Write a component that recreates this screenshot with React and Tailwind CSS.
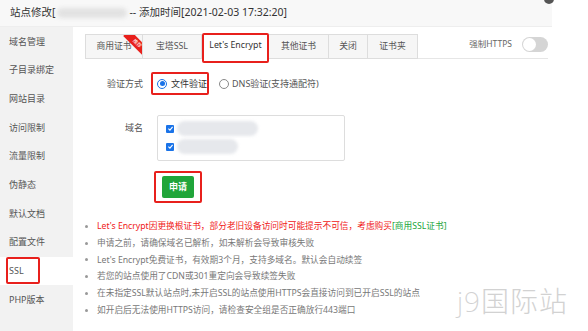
import React from "react";

const menu = [
  "域名管理",
  "子目录绑定",
  "网站目录",
  "访问限制",
  "流量限制",
  "伪静态",
  "默认文档",
  "配置文件",
  "SSL",
  "PHP版本",
];

const tabs = ["商用证书", "宝塔SSL", "Let's Encrypt", "其他证书", "关闭", "证书夹"];

const tips = [
  "申请之前，请确保域名已解析，如未解析会导致审核失败",
  "Let's Encrypt免费证书，有效期3个月，支持多域名。默认会自动续签",
  "若您的站点使用了CDN或301重定向会导致续签失败",
  "在未指定SSL默认站点时,未开启SSL的站点使用HTTPS会直接访问到已开启SSL的站点",
  "如开启后无法使用HTTPS访问，请检查安全组是否正确放行443端口",
];

const CheckBox = () => (
  <span className="w-[8px] h-[8px] rounded-[1px] bg-[#1a73e8] flex items-center justify-center">
    <svg viewBox="0 0 10 10" className="w-[7px] h-[7px]">
      <path d="M2 5.2 L4.2 7.3 L8 2.8" stroke="white" strokeWidth="1.6" fill="none" />
    </svg>
  </span>
);

const App = () => {
  return (
    <div
      className="w-[588px] h-[331px] bg-white relative overflow-hidden text-[#333]"
      style={{ fontFamily: '"Noto Sans", "Noto Sans CJK SC", sans-serif' }}
    >
      <div className="w-[552px] h-full flex flex-col">
        {/* Header */}
        <div className="h-[27px] shrink-0 bg-[#f8f8f8] border-b border-[#eee] flex items-center pl-[10px] text-[10.5px]">
          <span>站点修改[</span>
          <span className="w-[70px] h-[10px] mx-[2px] rounded-full bg-[#e2e2e2] blur-[2px]"></span>
          <span>-- 添加时间[2021-02-03 17:32:20]</span>
        </div>

        <div className="flex flex-1">
          {/* Sidebar */}
          <div className="w-[73px] shrink-0 bg-[#f2f2f2] text-[9px] text-[#555]">
            {menu.map((m) =>
              m === "SSL" ? (
                <div key={m} className="h-[28.7px] bg-white flex items-center pl-[6px]">
                  <span className="h-[27px] w-[34px] border-2 border-[#e8201c] rounded-[2px] flex items-center pl-[1px]">
                    SSL
                  </span>
                </div>
              ) : (
                <div key={m} className="h-[28.7px] flex items-center pl-[9px]">
                  {m}
                </div>
              )
            )}
          </div>

          {/* Content */}
          <div className="flex-1 pl-[12px] pr-[4px] pt-[7px]">
            <div className="flex items-start h-[25px] border-b border-[#e6e6e6] text-[8.8px] text-[#555]">
              {tabs.map((t, i) =>
                t === "Let's Encrypt" ? (
                  <div
                    key={t}
                    className="h-[30px] -mt-[1px] w-[67px] bg-white border-2 border-[#e8201c] rounded-[2px] flex items-center justify-center text-[#333] pb-[5px] relative z-10"
                  >
                    {t}
                  </div>
                ) : (
                  <div
                    key={t}
                    className={`h-[25px] border border-[#ddd] bg-[#f6f6f6] flex items-center justify-center relative overflow-hidden ${
                      i === 0 ? "w-[58px]" : i === 1 ? "w-[59px] border-l-0" : i === 3 ? "w-[60px] border-l-0" : i === 4 ? "w-[39px] border-l-0" : "w-[50px] border-l-0"
                    }`}
                  >
                    {t}
                    {i === 0 && (
                      <div className="absolute left-[36px] top-[4px] w-[30px] h-[9px] bg-[#e8201c] rotate-45 flex items-center justify-center">
                        <span className="text-[5px] text-white leading-none">推荐</span>
                      </div>
                    )}
                  </div>
                )
              )}
              <div className="flex-1 flex items-center justify-end h-[25px] pb-[4px] gap-[10px]">
                <span className="text-[8.5px] text-[#666]">强制HTTPS</span>
                <span className="w-[26px] h-[15px] rounded-full bg-[#d5d5d5] flex items-center pl-[1px]">
                  <span className="w-[13px] h-[13px] rounded-full bg-white"></span>
                </span>
              </div>
            </div>

            {/* Verify method */}
            <div className="flex items-center mt-[13px] text-[9px] text-[#555]">
              <span className="w-[58px] text-right">验证方式</span>
              <div className="ml-[8px] h-[23px] w-[58px] border-2 border-[#e8201c] rounded-[2px] flex items-center pl-[4px] gap-[4px]">
                <span className="w-[10px] h-[10px] rounded-full border border-[#1a73e8] flex items-center justify-center">
                  <span className="w-[5px] h-[5px] rounded-full bg-[#1a73e8]"></span>
                </span>
                <span className="text-[#333]">文件验证</span>
              </div>
              <span className="ml-[10px] w-[10px] h-[10px] rounded-full border border-[#888]"></span>
              <span className="ml-[3px]">DNS验证(支持通配符)</span>
            </div>

            {/* Domain */}
            <div className="flex items-start mt-[20px] text-[9px] text-[#555]">
              <span className="w-[58px] text-right mt-[6px]">域名</span>
              <div className="ml-[14px] w-[188px] h-[46px] border border-[#ddd] rounded-[2px] pl-[8px] pt-[4px] flex flex-col gap-[1px]">
                <div className="flex items-center gap-[3px] h-[17px]">
                  <CheckBox />
                  <span className="w-[81px] h-[15px] rounded-full bg-[#e6e8ec] blur-[1.5px]"></span>
                </div>
                <div className="flex items-center gap-[3px] h-[17px]">
                  <CheckBox />
                  <span className="w-[61px] h-[15px] rounded-full bg-[#e6e8ec] blur-[1.5px]"></span>
                </div>
              </div>
            </div>

            {/* Apply button */}
            <div className="ml-[69px] mt-[10px] w-[48px] h-[32px] border-2 border-[#e8201c] rounded-[2px] flex items-center justify-center">
              <button className="w-[32px] h-[22px] bg-[#20a53a] rounded-[2px] text-white text-[9px] font-bold">
                申请
              </button>
            </div>

            {/* Tips */}
            <ul className="mt-[15px] text-[8.7px] text-[#777] leading-[16.8px]">
              <li className="flex items-center">
                <span className="w-[3px] h-[3px] rounded-full bg-[#999] mr-[9px]"></span>
                <span className="text-[#f01818]">
                  Let's Encrypt因更换根证书，部分老旧设备访问时可能提示不可信，考虑购买
                  <span className="text-[#20a53a]">[商用SSL证书]</span>
                </span>
              </li>
              {tips.map((t) => (
                <li key={t} className="flex items-center">
                  <span className="w-[3px] h-[3px] rounded-full bg-[#999] mr-[9px]"></span>
                  <span>{t}</span>
                </li>
              ))}
            </ul>
          </div>
        </div>
      </div>

      {/* close button edge */}
      <div className="absolute -top-[6px] left-[544px] w-[10px] h-[10px] rounded-full bg-[#555]"></div>

      {/* watermark */}
      <div className="absolute left-[457px] top-[287px] text-[28px] font-extralight text-[#d2d2d2] tracking-[1px] leading-none">
        j9国际站
      </div>
    </div>
  );
};

export default App;
